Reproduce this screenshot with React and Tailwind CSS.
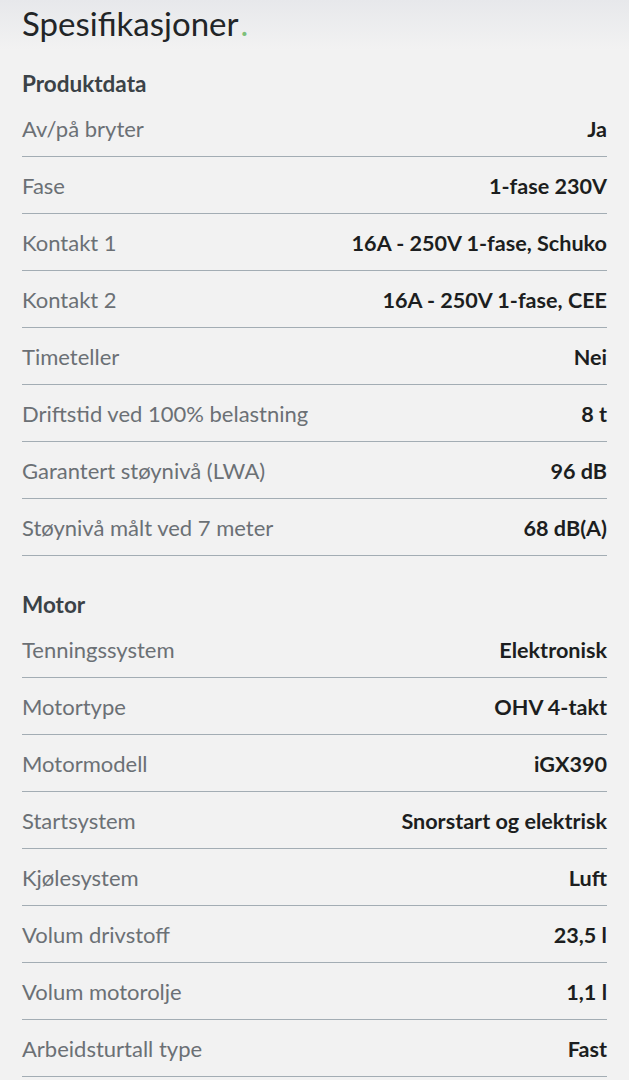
const sections = [
  {
    title: 'Produktdata',
    rows: [
      ['Av/på bryter', 'Ja'],
      ['Fase', '1-fase 230V'],
      ['Kontakt 1', '16A - 250V 1-fase, Schuko'],
      ['Kontakt 2', '16A - 250V 1-fase, CEE'],
      ['Timeteller', 'Nei'],
      ['Driftstid ved 100% belastning', '8 t'],
      ['Garantert støynivå (LWA)', '96 dB'],
      ['Støynivå målt ved 7 meter', '68 dB(A)'],
    ],
  },
  {
    title: 'Motor',
    rows: [
      ['Tenningssystem', 'Elektronisk'],
      ['Motortype', 'OHV 4-takt'],
      ['Motormodell', 'iGX390'],
      ['Startsystem', 'Snorstart og elektrisk'],
      ['Kjølesystem', 'Luft'],
      ['Volum drivstoff', '23,5 l'],
      ['Volum motorolje', '1,1 l'],
      ['Arbeidsturtall type', 'Fast'],
    ],
  },
]

export default function App() {
  return (
    <div className="min-h-[1080px] bg-[#f2f2f2] bg-[linear-gradient(to_bottom,#e7e8eb_0px,#f2f2f2_50px)] px-[22px] font-['Lato','Open_Sans',sans-serif]">
      <h1 className="pt-[4px] text-[33px] leading-[38px] text-[#222527]">
        Spesifikasjoner<span className="ml-[2px] text-[#7dbf7a]">.</span>
      </h1>

      {sections.map((section, i) => (
        <div key={section.title} className={i === 0 ? 'mt-[28px]' : 'mt-[35px]'}>
          <h2 className="mb-[2px] text-[22.5px] font-bold leading-[28px] text-[#3b4247]">
            {section.title}
          </h2>
          {section.rows.map(([label, value]) => (
            <div
              key={label}
              className="flex items-center justify-between border-b border-[#a3adb4] pt-[15px] pb-[13px] leading-[28px]"
            >
              <span className="text-[22px] text-[#6b7075]">{label}</span>
              <span className="text-[21.6px] font-bold text-[#1c1e20]">{value}</span>
            </div>
          ))}
        </div>
      ))}
    </div>
  )
}
